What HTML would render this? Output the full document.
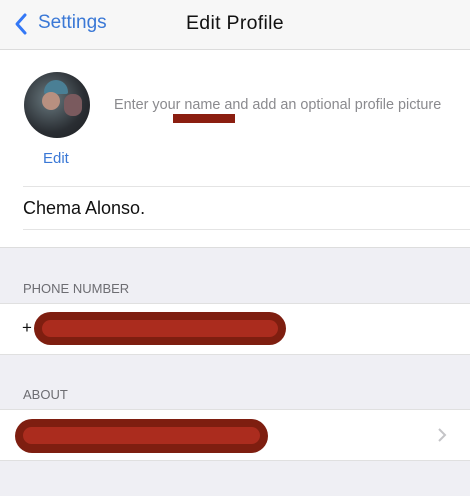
<html><head><style>
body{margin:0;width:470px;height:496px;background:#efeff4;font-family:"Liberation Sans",sans-serif;position:relative;overflow:hidden}
.a{position:absolute}
</style></head><body>
<div class="a" style="left:0;top:0;width:470px;height:49px;background:#f7f7f7;border-bottom:1px solid #dcdcdc"></div>
<svg class="a" style="left:13px;top:12px" width="16" height="24"><path d="M12 3 L4 12 L12 21" stroke="#3478f6" stroke-width="3" fill="none" stroke-linecap="round" stroke-linejoin="round"/></svg>
<div class="a" style="left:38px;top:12px;font-size:19px;color:#3a78d6">Settings</div>
<div class="a" style="left:186px;top:12px;font-size:19.5px;color:#111;font-weight:500;letter-spacing:0.3px">Edit Profile</div>
<div class="a" style="left:0;top:50px;width:470px;height:197px;background:#fff;border-bottom:1px solid #ddd"></div>
<div class="a" style="left:24px;top:72px;width:66px;height:66px;border-radius:50%;background:radial-gradient(circle at 40% 40%,#6a7a80,#2a2e33 60%,#1a1c1f);overflow:hidden">
<div class="a" style="left:20px;top:8px;width:24px;height:14px;border-radius:12px 12px 2px 2px;background:#4a7f95"></div>
<div class="a" style="left:40px;top:22px;width:18px;height:22px;border-radius:8px;background:#7a5a5e"></div>
<div class="a" style="left:18px;top:20px;width:18px;height:18px;border-radius:50%;background:#b89080"></div>
</div>
<div class="a" style="left:43px;top:150px;font-size:15px;color:#3a78d6">Edit</div>
<div class="a" style="left:114px;top:97px;font-size:14.4px;color:#8a8a8e">Enter your name and add an optional profile picture</div>
<div class="a" style="left:173px;top:114px;width:62px;height:9px;background:#8b1e10"></div>
<div class="a" style="left:23px;top:186px;width:447px;height:1px;background:#e4e4e4"></div>
<div class="a" style="left:23px;top:198px;font-size:18px;color:#111">Chema Alonso.</div>
<div class="a" style="left:23px;top:229px;width:447px;height:1px;background:#e4e4e4"></div>
<div class="a" style="left:23px;top:281px;font-size:13px;color:#6d6d72">PHONE NUMBER</div>
<div class="a" style="left:0;top:303px;width:470px;height:50px;background:#fff;border-top:1px solid #e0e0e0;border-bottom:1px solid #e0e0e0"></div>
<div class="a" style="left:22px;top:318px;font-size:17px;color:#111">+</div>
<div class="a" style="left:34px;top:312px;width:252px;height:33px;border-radius:17px;background:#7e1e10"></div>
<div class="a" style="left:42px;top:320px;width:236px;height:17px;border-radius:9px;background:#ab2c1e"></div>
<div class="a" style="left:23px;top:387px;font-size:13px;color:#6d6d72">ABOUT</div>
<div class="a" style="left:0;top:409px;width:470px;height:50px;background:#fff;border-top:1px solid #e0e0e0;border-bottom:1px solid #e0e0e0"></div>
<div class="a" style="left:15px;top:419px;width:253px;height:34px;border-radius:17px;background:#7e1e10"></div>
<div class="a" style="left:23px;top:427px;width:237px;height:17px;border-radius:9px;background:#ab2c1e"></div>
<svg class="a" style="left:436px;top:426px" width="12" height="18"><path d="M3 3 L9 9 L3 15" stroke="#c4c4c7" stroke-width="2" fill="none"/></svg>
</body></html>
